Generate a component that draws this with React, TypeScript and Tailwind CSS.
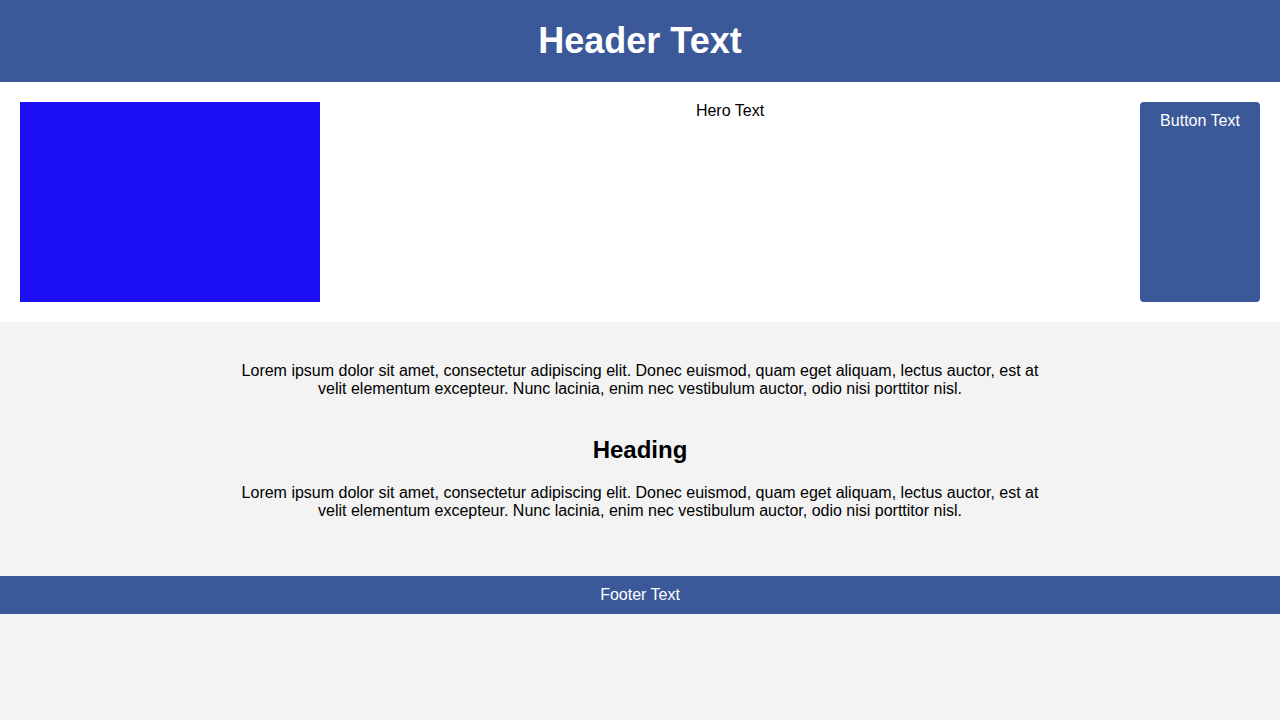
import React from "react";

export default function App() {
  const lorem =
    "Lorem ipsum dolor sit amet, consectetur adipiscing elit. Donec euismod, quam eget aliquam, lectus auctor, est at velit elementum excepteur. Nunc lacinia, enim nec vestibulum auctor, odio nisi porttitor nisl.";
  return (
    <div
      className="min-h-screen bg-[#f3f3f3] text-black"
      style={{ fontFamily: '"Liberation Sans", Arial, sans-serif' }}
    >
      <header className="bg-[#3b5998] h-[82px] flex items-center justify-center">
        <h1 className="text-[36px] font-bold leading-[42px] text-white">Header Text</h1>
      </header>
      <section className="bg-white p-5 flex items-stretch">
        <div className="w-[300px] h-[200px] bg-[#1e10f5] shrink-0" />
        <div className="flex-1 text-center text-[16px] leading-[18px]">Hero Text</div>
        <button className="w-[120px] shrink-0 bg-[#3b5998] text-white rounded text-[16px] leading-[18px] pt-[10px] flex justify-center items-start">
          Button Text
        </button>
      </section>
      <main className="pt-[40px] pb-[56px] flex flex-col items-center">
        <div className="w-[800px] text-center">
          <p className="text-[16px] leading-[18px]">{lorem}</p>
          <h2 className="mt-[38px] mb-[21px] text-[24px] font-bold leading-[27px]">Heading</h2>
          <p className="text-[16px] leading-[18px]">{lorem}</p>
        </div>
      </main>
      <footer className="bg-[#3b5998] h-[38px] flex items-center justify-center text-white text-[16px] leading-[18px]">
        Footer Text
      </footer>
    </div>
  );
}
